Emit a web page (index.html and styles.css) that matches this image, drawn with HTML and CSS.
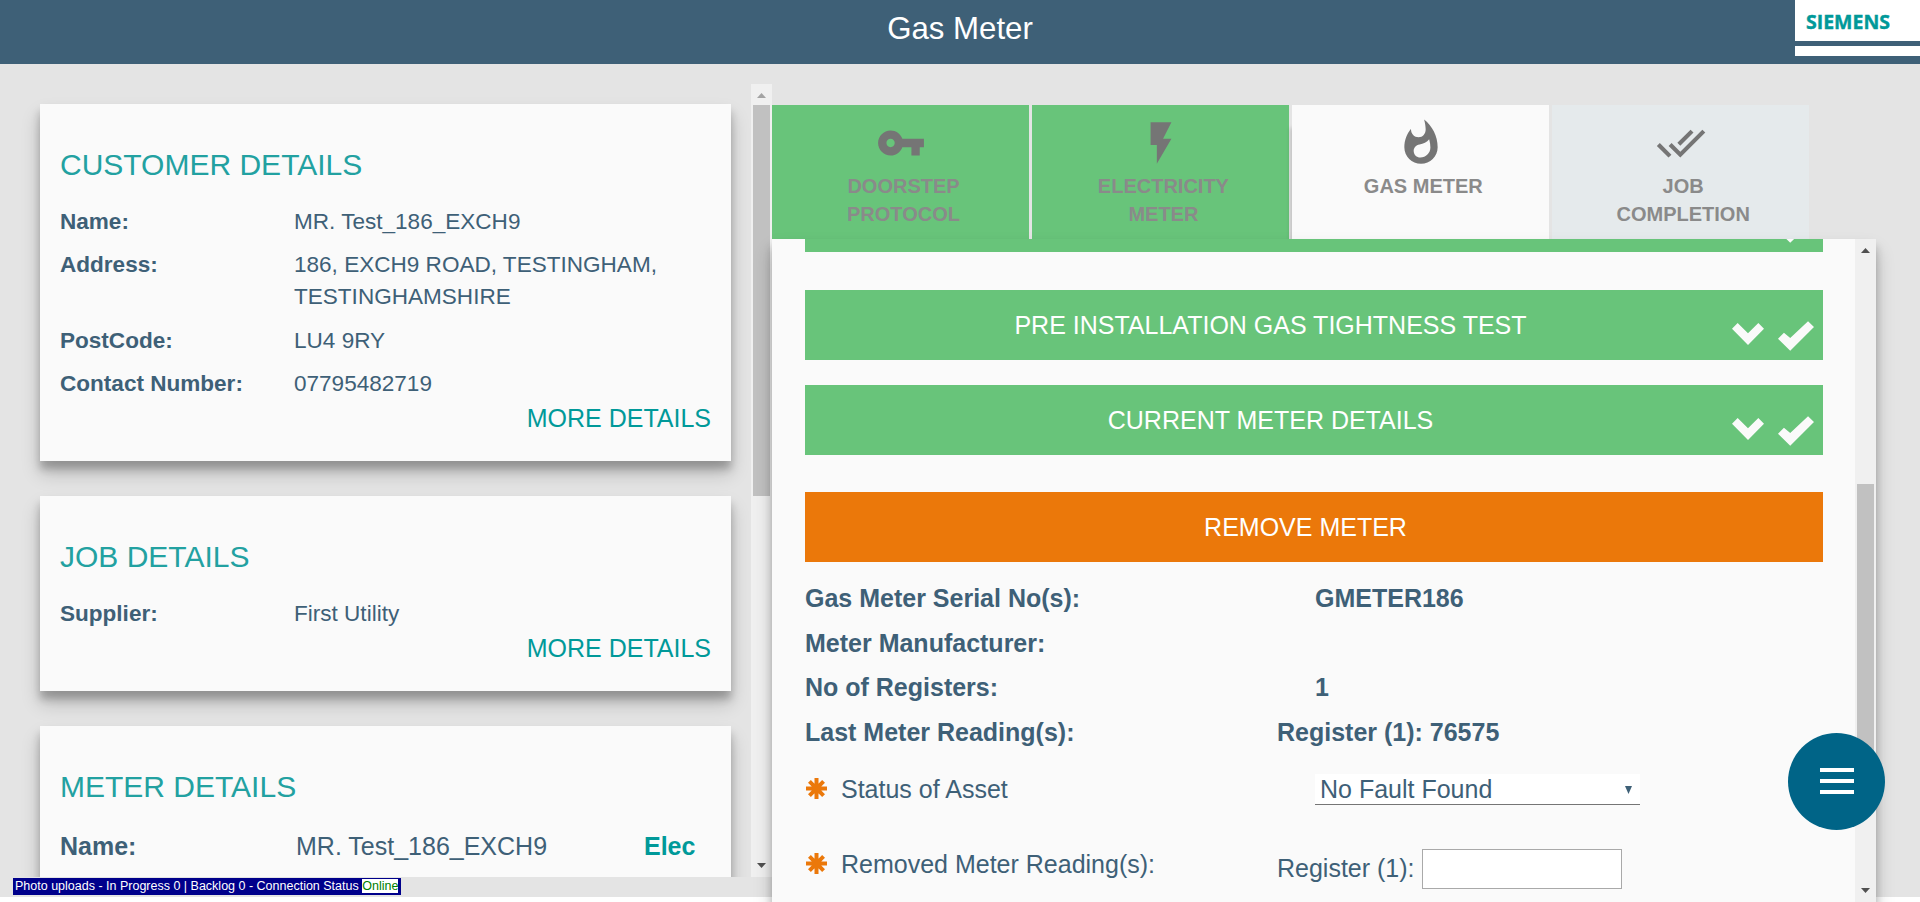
FILE: index.html
```html
<!DOCTYPE html>
<html lang="en">
<head>
<meta charset="utf-8">
<title>Gas Meter</title>
<link rel="stylesheet" href="styles.css">
</head>
<body>
<svg class="defs" width="0" height="0">
  <symbol id="chevron" viewBox="0 0 96 66"><path d="M0 17 17 0 48 31 79 0 96 17 48 66z"/></symbol>
  <symbol id="check" viewBox="0 0 109 90"><path d="M0 53 18 35 37 51 91 0 109 18 37 90z"/></symbol>
  <symbol id="asterisk" viewBox="0 0 22 22"><path d="M11 0v22M0 11h22M3.6 3.6l14.8 14.8M18.4 3.6 3.6 18.4" fill="none" stroke="#eb780a" stroke-width="4.2"/></symbol>
</svg>
<header class="topbar">
  <h1 class="topbar-title">Gas Meter</h1>
  <div class="logo"><span class="logo-text">SIEMENS</span><span class="logo-line"></span></div>
</header>
<main class="page">
  <section class="left">
    <div class="cards">
      <article class="card card-customer">
        <h2>CUSTOMER DETAILS</h2>
        <dl>
          <dt>Name:</dt><dd>MR. Test_186_EXCH9</dd>
          <dt>Address:</dt><dd>186, EXCH9 ROAD, TESTINGHAM,<br>TESTINGHAMSHIRE</dd>
          <dt>PostCode:</dt><dd>LU4 9RY</dd>
          <dt>Contact Number:</dt><dd>07795482719</dd>
        </dl>
        <a class="more">MORE DETAILS</a>
      </article>
      <article class="card card-job">
        <h2>JOB DETAILS</h2>
        <dl><dt>Supplier:</dt><dd>First Utility</dd></dl>
        <a class="more">MORE DETAILS</a>
      </article>
      <article class="card card-meter">
        <h2>METER DETAILS</h2>
        <div class="meter-row"><b>Name:</b><span>MR. Test_186_EXCH9</span><b class="fuel">Elec</b></div>
      </article>
    </div>
    <div class="scroll scroll-left">
      <i class="arrow up dim"></i><i class="thumb"></i><i class="arrow down"></i>
    </div>
  </section>
  <section class="right">
    <nav class="tabs">
      <a class="tab done"><svg viewBox="0 0 24 24"><path d="M12.65 10C11.83 7.67 9.61 6 7 6c-3.31 0-6 2.69-6 6s2.69 6 6 6c2.61 0 4.83-1.67 5.65-4H17v4h4v-4h2v-4H12.65zM7 14c-1.1 0-2-.9-2-2s.9-2 2-2 2 .9 2 2-.9 2-2 2z"/></svg><span>DOORSTEP<br>PROTOCOL</span></a>
      <a class="tab done"><svg viewBox="0 0 24 24"><path d="M7 2v11h3v9l7-12h-4l4-8z"/></svg><span>ELECTRICITY<br>METER</span></a>
      <a class="tab active"><svg viewBox="0 0 24 24"><path d="M13.5.67s.74 2.65.74 4.8c0 2.06-1.35 3.73-3.41 3.73-2.07 0-3.63-1.67-3.63-3.73l.03-.36C5.21 7.51 4 10.62 4 14c0 4.42 3.58 8 8 8s8-3.58 8-8C20 8.61 17.41 3.8 13.5.67zM11.71 19c-1.78 0-3.22-1.4-3.22-3.14 0-1.62 1.05-2.76 2.81-3.12 1.77-.36 3.6-1.21 4.62-2.58.39 1.29.59 2.65.59 4.04 0 2.65-2.15 4.8-4.8 4.8z"/></svg><span>GAS METER</span></a>
      <a class="tab next"><svg viewBox="0 0 24 24"><path d="M18 7l-1.41-1.41-6.34 6.34 1.41 1.41L18 7zm4.24-1.41L11.66 16.17 7.48 12l-1.41 1.41L11.66 19l12-12-1.42-1.41zM.41 13.41L6 19l1.41-1.41L1.83 12 .41 13.41z"/></svg><span>JOB<br>COMPLETION</span></a>
    </nav>
    <div class="panel">
      <div class="content">
        <div class="bar bar-first"><span></span><svg class="chev"><use href="#chevron"/></svg><svg class="chk"><use href="#check"/></svg></div>
        <div class="bar"><span>PRE INSTALLATION GAS TIGHTNESS TEST</span><svg class="chev"><use href="#chevron"/></svg><svg class="chk"><use href="#check"/></svg></div>
        <div class="bar"><span>CURRENT METER DETAILS</span><svg class="chev"><use href="#chevron"/></svg><svg class="chk"><use href="#check"/></svg></div>
        <div class="bar bar-open"><span>REMOVE METER</span></div>
        <div class="facts">
          <div class="fact"><b>Gas Meter Serial No(s):</b><b>GMETER186</b></div>
          <div class="fact"><b>Meter Manufacturer:</b></div>
          <div class="fact"><b>No of Registers:</b><b>1</b></div>
          <div class="fact wide"><b>Last Meter Reading(s):</b><b>Register (1): 76575</b></div>
        </div>
        <div class="field">
          <label><svg class="req"><use href="#asterisk"/></svg>Status of Asset</label>
          <div class="select">No Fault Found<svg class="caret" viewBox="0 0 7 8"><path d="M0 0h7L3.5 8z"/></svg></div>
        </div>
        <div class="field field-reading">
          <label><svg class="req"><use href="#asterisk"/></svg>Removed Meter Reading(s):</label>
          <div class="reading">Register (1):<input type="text"></div>
        </div>
      </div>
      <div class="scroll scroll-right">
        <i class="arrow up"></i><i class="thumb"></i><i class="arrow down"></i>
      </div>
    </div>
  </section>
</main>
<button class="fab" aria-label="Menu"><i></i><i></i><i></i></button>
<div class="status">Photo uploads - In Progress 0 | Backlog 0 - Connection Status <span>Online</span></div>
</body>
</html>
```
FILE: styles.css
```css
* { box-sizing: border-box; }
html { height: 100%; overflow: hidden; background: #fff; }
body {
  margin: 0;
  height: 902px;
  overflow: hidden;
  background: #fff;
  color: #3e6077;
  font-family: "Liberation Sans", Arial, sans-serif;
}
h1, h2, dl, dd { margin: 0; font-weight: 400; }
.defs { position: absolute; }

.topbar {
  position: relative;
  height: 64px;
  background: #3e6077;
  color: #fff;
  text-align: center;
}
.topbar-title { font-size: 31.2px; line-height: 57px; }
.logo {
  position: absolute;
  top: 0;
  right: 0;
  width: 125px;
  height: 56px;
  background: #fff;
  text-align: left;
}
.logo-text {
  display: block;
  height: 41px;
  padding-left: 11px;
  color: #099;
  font: 700 19.5px/44px "Open Sans", sans-serif;
  -webkit-text-stroke: .4px #099;
}
.logo-line { display: block; height: 5px; background: #3e6077; }

.page {
  display: flex;
  height: 833px;
  background: #e4e4e4;
}
.left {
  display: flex;
  width: 772px;
  height: 793px;
  margin-top: 20px;
}
.cards {
  width: 751px;
  padding: 20px 20px 0 40px;
  overflow: hidden;
}
.card {
  height: 357px;
  margin-bottom: 35px;
  padding: 41px 20px 0;
  background: #fafafa;
}
.card, .panel {
  box-shadow: 0 8px 8px rgba(0, 0, 0, .22), 0 12px 18px rgba(0, 0, 0, .2);
}
.card-job { height: 195px; }
.card-meter { height: 300px; }
.card h2 { font-size: 30px; line-height: 40px; color: #22a1a1; }
.card dl {
  display: grid;
  grid-template-columns: 234px 1fr;
  row-gap: 11.3px;
  margin-top: 21px;
  font-size: 22.55px;
  line-height: 32px;
}
.card dt { font-weight: 700; }
.more {
  display: block;
  color: #099;
  font-size: 25px;
  line-height: 30px;
  margin-top: 3px;
  text-align: right;
}
.meter-row {
  display: flex;
  margin-top: 22px;
  font-size: 25px;
  line-height: 34px;
}
.meter-row b:first-child { width: 236px; }
.meter-row span { width: 348px; }
.fuel { color: #099; }

.scroll {
  display: flex;
  flex-direction: column;
  align-items: center;
  width: 21px;
  padding: 9px 0;
  background: #f0f0f0;
}
.arrow { width: 9px; height: 5px; background: #505050; }
.arrow.up { clip-path: polygon(50% 0, 100% 100%, 0 100%); }
.arrow.down { clip-path: polygon(0 0, 100% 0, 50% 100%); margin-top: auto; }
.arrow.dim { background: #a3a3a3; }
.thumb { width: 17px; background: #c1c1c1; }
.scroll-left .thumb { margin-top: 7px; height: 391px; }
.scroll-right .thumb { margin-top: 231px; height: 293px; }

.right { width: 1104px; margin-top: 41px; }
.tabs { display: flex; gap: 2.9px; height: 134px; }
.tab {
  width: 257px;
  padding-top: 13px;
  background: #e5eaec;
  color: #8a8a8a;
  font-size: 20px;
  font-weight: 700;
  line-height: 28px;
  text-align: center;
}
.tab svg { display: block; width: 50px; height: 50px; margin: 0 auto 4px 104px; fill: #757575; }
.tab span { display: block; padding-left: 6px; }
.tab.done { background: #68c47a; }
.tab.active { background: #fafafa; box-shadow: -3px 22px 4px -1px rgba(0, 0, 0, .15); }

.panel {
  position: relative;
  display: flex;
  height: 663px;
  background: #fafafa;
}
.content { width: 1083px; padding: 0 32px 0 33px; overflow: hidden; }
.bar {
  display: flex;
  width: 1018px;
  height: 70px;
  margin-top: 25px;
  background: #68c47a;
  color: #fff;
  fill: #fafafa;
  font-size: 25px;
  line-height: 70px;
  text-align: center;
}
.bar span { width: 927px; padding-left: 4px; white-space: nowrap; }
.bar-first { margin: -57px 0 38px; }
.chev { width: 32px; height: 22px; margin-top: 33px; }
.chk { width: 36px; height: 30px; margin: 31px 0 0 14px; }
.bar-open { margin-top: 37px; background: #eb780a; }
.bar-open span { width: 1001px; padding: 0; }
.facts { margin-top: 14px; font-size: 25px; line-height: 44.7px; }
.fact { display: flex; height: 44.7px; }
.fact b:first-child { width: 510px; }
.fact.wide b:first-child { width: 472px; }
.field { display: flex; margin-top: 19px; font-size: 25px; }
.field label { display: flex; width: 510px; line-height: 30px; }
.req { width: 21px; height: 21px; margin: 4px 14px 0 1px; }
.select {
  display: flex;
  justify-content: space-between;
  width: 325px;
  height: 31px;
  padding: 0 8px 0 5px;
  background: #fff;
  border-bottom: 1px solid #757575;
  line-height: 30px;
}
.caret { width: 7px; height: 8px; margin-top: 12px; fill: #3e6077; }
.field-reading { margin-top: 44px; }
.field-reading label { width: 472px; }
.reading { display: flex; line-height: 39px; }
.reading input {
  width: 200px;
  height: 40px;
  margin-left: 7px;
  background: #fff;
  border: 1px solid #a9a9a9;
}

.fab {
  position: absolute;
  left: 1788px;
  top: 732.5px;
  display: flex;
  flex-direction: column;
  align-items: center;
  justify-content: center;
  gap: 7px;
  width: 97px;
  height: 97px;
  padding: 0;
  border: 0;
  border-radius: 50%;
  background: #006487;
}
.fab i { width: 34px; height: 4px; background: #fff; }

.status {
  position: absolute;
  left: 13px;
  top: 878px;
  width: 388px;
  height: 17px;
  padding-left: 2px;
  background: #00008b;
  color: #fff;
  font-size: 12.5px;
  line-height: 15px;
  white-space: nowrap;
}
.status span { display: inline-block; height: 14px; margin-top: 1px; line-height: 14px; background: #fff; color: #008000; }
```
